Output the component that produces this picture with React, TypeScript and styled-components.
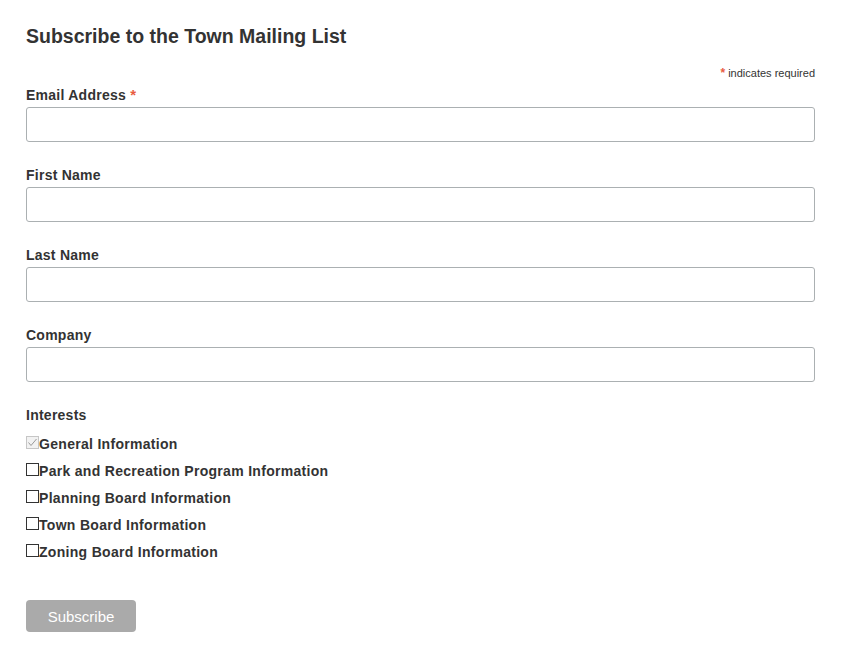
import styled, { createGlobalStyle } from "styled-components";

const GlobalStyle = createGlobalStyle`
  html, body {
    margin: 0;
    padding: 0;
    background: #ffffff;
  }
  body {
    font-family: "Liberation Sans", Arial, Helvetica, sans-serif;
    color: #333333;
  }
`;

const FormWrap = styled.form`
  width: 789px;
  padding: 24px 0 0 26px;
  display: flex;
  flex-direction: column;
`;

const Title = styled.h2`
  margin: 0;
  font-size: 19.5px;
  line-height: 24px;
  font-weight: bold;
  color: #333333;
`;

const RequiredNote = styled.div`
  margin: 19px 0 6px;
  align-self: flex-end;
  font-size: 11px;
  line-height: 13px;
  color: #333333;
`;

const Asterisk = styled.span<{ $big?: boolean }>`
  color: #e85c41;
  font-size: ${(p) => (p.$big ? "15px" : "12px")};
  font-weight: bold;
`;

const FieldGroup = styled.div`
  display: flex;
  flex-direction: column;
  margin-bottom: 24px;
`;

const Label = styled.label`
  font-size: 14px;
  line-height: 18px;
  font-weight: bold;
  letter-spacing: 0.25px;
  margin-bottom: 3px;
`;

const TextInput = styled.input`
  box-sizing: border-box;
  width: 100%;
  height: 35px;
  border: 1px solid #abb0b2;
  border-radius: 3px;
  padding: 0 8px;
  font-family: inherit;
  font-size: 15px;
  background: #ffffff;
  outline: none;
`;

const CheckList = styled.ul`
  list-style: none;
  margin: 3px 0 0;
  padding: 0;
`;

const CheckRow = styled.li`
  display: flex;
  align-items: center;
  height: 27px;
  font-size: 14px;
  font-weight: bold;
  letter-spacing: 0.3px;
`;

const Box = styled.span<{ $disabled?: boolean }>`
  box-sizing: border-box;
  width: 13px;
  height: 13px;
  flex: none;
  display: flex;
  align-items: center;
  justify-content: center;
  border: 1px solid ${(p) => (p.$disabled ? "#c6c6c6" : "#333333")};
  background: ${(p) => (p.$disabled ? "#f2f2f2" : "#ffffff")};
  margin-top: -2px;
`;

const SubmitButton = styled.button`
  margin-top: 35px;
  width: 110px;
  height: 32px;
  border: none;
  border-radius: 4px;
  background: #aaaaaa;
  color: #ffffff;
  font-family: inherit;
  font-size: 15px;
  cursor: pointer;
`;

const interests = [
  { label: "General Information", checked: true },
  { label: "Park and Recreation Program Information", checked: false },
  { label: "Planning Board Information", checked: false },
  { label: "Town Board Information", checked: false },
  { label: "Zoning Board Information", checked: false },
];

const fields = ["First Name", "Last Name", "Company"];

const App = () => {
  return (
    <>
      <GlobalStyle />
      <FormWrap onSubmit={(e) => e.preventDefault()}>
        <Title>Subscribe to the Town Mailing List</Title>
        <RequiredNote>
          <Asterisk>*</Asterisk> indicates required
        </RequiredNote>
        <FieldGroup>
          <Label>
            Email Address <Asterisk $big>*</Asterisk>
          </Label>
          <TextInput type="email" />
        </FieldGroup>
        {fields.map((f) => (
          <FieldGroup key={f}>
            <Label>{f}</Label>
            <TextInput type="text" />
          </FieldGroup>
        ))}
        <Label>Interests</Label>
        <CheckList>
          {interests.map((item) => (
            <CheckRow key={item.label}>
              <Box $disabled={item.checked}>
                {item.checked && (
                  <svg width="11" height="11" viewBox="0 0 11 11">
                    <path
                      d="M1.5 5.5 L4 8.5 L9.5 2"
                      fill="none"
                      stroke="#9a9a9a"
                      strokeWidth="1"
                    />
                  </svg>
                )}
              </Box>
              {item.label}
            </CheckRow>
          ))}
        </CheckList>
        <SubmitButton type="submit">Subscribe</SubmitButton>
      </FormWrap>
    </>
  );
};

export default App;
